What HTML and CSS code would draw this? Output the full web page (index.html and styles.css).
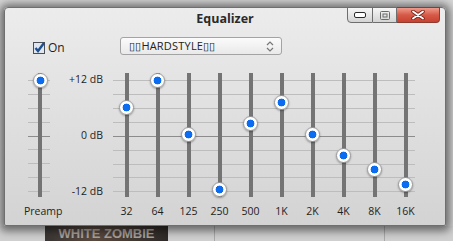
FILE: index.html
```html
<!DOCTYPE html>
<html lang="en">
  <head>
    <meta charset="UTF-8" />
    <meta name="viewport" content="width=device-width, initial-scale=1" />
    <title>Equalizer</title>
    <link rel="stylesheet" href="styles.css">
  </head>
  <body>
    <div class="desk">
      <div class="desk-main">
        <div class="side-list">
          <div class="side-rule"></div>
          <div class="side-title">w</div>
          <div class="side-sub">c</div>
        </div>
      </div>
      <div class="desk-shelf">
        <div class="album">WHITE ZOMBIE</div>
        <div class="shelf-cell"></div>
        <div class="shelf-cell"></div>
      </div>
    </div>

    <div class="window">
      <div class="titlebar">
        <span class="title">Equalizer</span>
        <div class="controls">
          <button class="ctl ctl-min" title="Minimize">
            <svg width="12" height="6" viewBox="0 0 12 6"><rect x="0.5" y="0.5" width="11" height="5" rx="1.5" fill="#fff" stroke="#2b2b2b"/></svg>
          </button>
          <button class="ctl ctl-max" title="Maximize">
            <svg width="10" height="9" viewBox="0 0 10 9"><rect x="0.5" y="0.5" width="9" height="8" rx="1" fill="none" stroke="#6b6b6b"/><rect x="3" y="3" width="4" height="3" fill="none" stroke="#6b6b6b"/></svg>
          </button>
          <button class="ctl ctl-close" title="Close">
            <svg width="14" height="10" viewBox="0 0 14 10"><path d="M2 1.5 L12 8.5 M12 1.5 L2 8.5" stroke="#7a2419" stroke-width="3.6" stroke-linecap="round"/><path d="M2 1.5 L12 8.5 M12 1.5 L2 8.5" stroke="#fff" stroke-width="1.8" stroke-linecap="round"/></svg>
          </button>
        </div>
      </div>

      <div class="toolbar">
        <label class="onoff">
          <svg class="check" width="12" height="12" viewBox="0 0 12 12"><rect x="0.5" y="0.5" width="11" height="11" fill="#dfe6ee" stroke="#4a4f57"/><path d="M2.5 6 L5 9 L11 1" fill="none" stroke="#1f4f8f" stroke-width="2.4"/></svg>
          On
        </label>
        <div class="preset">
          <span>▯▯HARDSTYLE▯▯</span>
          <svg width="8" height="11" viewBox="0 0 8 11"><path d="M1 4 L4 1 L7 4 M1 7 L4 10 L7 7" fill="none" stroke="#777" stroke-width="1.2"/></svg>
        </div>
      </div>

      <div class="eq">
        <div class="stack preamp">
          <div class="lines">
            <i></i><i></i><i></i><i></i><i class="zero"></i><i></i><i></i><i></i><i></i>
          </div>
          <div class="track-row">
            <div class="slider" style="--db: 12"><span class="knob"></span></div>
          </div>
        </div>

        <div class="db-scale">
          <span>+12 dB</span>
          <span>0 dB</span>
          <span>-12 dB</span>
        </div>

        <div class="stack bands">
          <div class="lines">
            <i></i><i></i><i></i><i></i><i class="zero"></i><i></i><i></i><i></i><i></i>
          </div>
          <div class="track-row">
            <div class="slider" style="--db: 6"><span class="knob"></span></div>
            <div class="slider" style="--db: 12"><span class="knob"></span></div>
            <div class="slider" style="--db: 0"><span class="knob"></span></div>
            <div class="slider" style="--db: -12"><span class="knob"></span></div>
            <div class="slider" style="--db: 2.6"><span class="knob"></span></div>
            <div class="slider" style="--db: 7"><span class="knob"></span></div>
            <div class="slider" style="--db: 0"><span class="knob"></span></div>
            <div class="slider" style="--db: -4.4"><span class="knob"></span></div>
            <div class="slider" style="--db: -7.6"><span class="knob"></span></div>
            <div class="slider" style="--db: -10.7"><span class="knob"></span></div>
          </div>
        </div>

        <div class="label-row">
          <span>Preamp</span>
        </div>
        <div></div>
        <div class="label-row">
          <span>32</span><span>64</span><span>125</span><span>250</span><span>500</span>
          <span>1K</span><span>2K</span><span>4K</span><span>8K</span><span>16K</span>
        </div>
      </div>
    </div>
  </body>
</html>
```

FILE: styles.css
```css
body {
  margin: 0;
  width: 453px;
  height: 241px;
  overflow: hidden;
  position: relative;
  background: #d6d6d6;
  font-family: "Open Sans", "Noto Sans", sans-serif;
}
/* page behind the equalizer window */
.desk {
  height: 241px;
  display: grid;
  grid-template-rows: 1fr 15px;
}
.desk-main {
  display: flex;
  justify-content: flex-end;
}
.side-list {
  width: 7px;
  padding-top: 127px;
  background: #e6e6e6;
  font-size: 8px;
  line-height: 13px;
}
.side-rule {
  height: 1px;
  background: #bcbcbc;
  margin-bottom: 37px;
}
.side-title {
  font-weight: bold;
  color: #333;
}
.side-sub {
  color: #999;
  margin-top: 3px;
}
.desk-shelf {
  display: flex;
  background: #d0d0d0;
}
.album {
  margin-left: 45px;
  width: 123px;
  background: linear-gradient(90deg, #3a3634, #5a4a40 40%, #2e2a28);
  color: #a9a29d;
  font: bold 13px/15px "Liberation Sans", sans-serif;
  text-align: center;
  white-space: nowrap;
  overflow: hidden;
}
.shelf-cell {
  width: 123px;
  border-left: 1px solid #a9a9a9;
  margin-left: 46px;
}

/* equalizer window */
.window {
  position: absolute;
  left: 4px;
  top: 7px;
  width: 440px;
  height: 217px;
  border: 1px solid #6f6f6f;
  border-radius: 4px 4px 2px 2px;
  background: linear-gradient(#ececec, #d3d3d3);
  box-shadow: 0 1px 8px 4px rgba(0, 0, 0, 0.5);
  color: #1e1e1e;
}
.titlebar {
  height: 22px;
  display: grid;
  grid-template-columns: 1fr auto 1fr;
}
.title {
  grid-column: 2;
  font-weight: bold;
  font-size: 12.5px;
  line-height: 22px;
  color: #2a2a2a;
}
.controls {
  grid-column: 3;
  justify-self: end;
  display: flex;
  height: 16px;
  margin: -1px 5px 0 0;
}
.ctl {
  height: 16px;
  padding: 0;
  border: 1px solid #6e6e6e;
  border-left: none;
  background: linear-gradient(#f7f7f7, #d4d4d4);
  display: flex;
  align-items: center;
  justify-content: center;
}
.ctl-min {
  width: 26px;
  border-left: 1px solid #6e6e6e;
  border-radius: 0 0 0 4px;
}
.ctl-max {
  width: 24px;
}
.ctl-close {
  width: 43px;
  border-color: #8d3a2f;
  border-radius: 0 0 4px 0;
  background: linear-gradient(#ef9b8c, #d65a47 50%, #c8412f);
}
.toolbar {
  display: flex;
  align-items: center;
  padding: 7px 0 0 28px;
  height: 18px;
}
.onoff {
  width: 87px;
  display: flex;
  align-items: center;
  gap: 3px;
  font-size: 12px;
  padding-top: 3px;
}
.preset {
  width: 145px;
  height: 16px;
  border: 1px solid #a3a3a3;
  border-radius: 3px;
  background: linear-gradient(#fbfbfb, #e9e9e9);
  display: flex;
  align-items: center;
  justify-content: space-between;
  padding: 0 7px 0 8px;
  box-sizing: content-box;
  font-size: 11px;
  letter-spacing: 0.2px;
  color: #222;
}
.preset span {
  line-height: 16px;
}

/* sliders */
.eq {
  margin-top: 18px;
  padding-left: 19px;
  display: grid;
  grid-template-columns: 32px 55px 310px;
  grid-template-rows: 124px 28px;
  font-size: 10.5px;
}
.stack {
  display: grid;
}
.stack > * {
  grid-area: 1 / 1;
}
.lines {
  display: flex;
  flex-direction: column;
  justify-content: space-between;
  padding: 7px 0 5px;
}
.lines i {
  display: block;
  height: 1px;
  background: #bdbdbd;
}
.lines i.zero {
  background: #8c8c8c;
}
.preamp .lines {
  margin: 0 6px 0 4px;
}
.bands .lines {
  margin: 0 6px 0 2px;
}
.track-row {
  display: flex;
}
.slider {
  flex: 1;
  display: flex;
  flex-direction: column;
  align-items: center;
  background: linear-gradient(#747474, #747474) center / 4px 100% no-repeat;
}
.knob {
  box-sizing: border-box;
  width: 15px;
  height: 15px;
  margin-top: calc((12 - var(--db)) * 4.5833px - 0.5px);
  border-radius: 50%;
  border: 1px solid #9a9a9a;
  background: radial-gradient(circle, #0b6cf0 0 3.6px, #fff 4.2px);
  box-shadow: 0 1px 2px rgba(0, 0, 0, 0.35);
}
.db-scale {
  display: flex;
  flex-direction: column;
  justify-content: space-between;
  align-items: flex-end;
  padding-right: 8px;
  line-height: 12px;
}
.label-row {
  display: flex;
  line-height: 28px;
}
.label-row span {
  flex: 1;
  text-align: center;
  white-space: nowrap;
}
```
